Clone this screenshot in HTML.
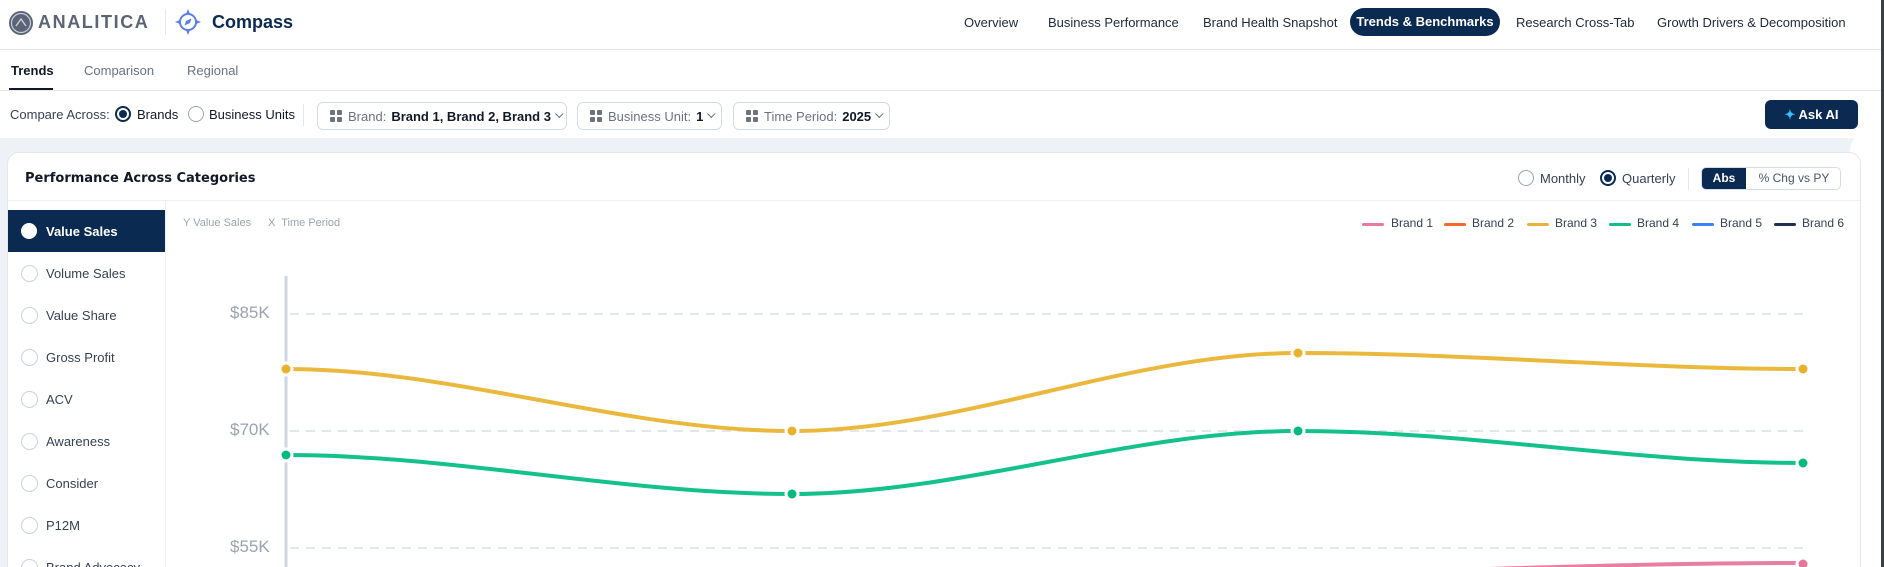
<!DOCTYPE html>
<html style="width:1884px;height:567px;overflow:hidden"><head><meta charset="utf-8"><style>
*{box-sizing:border-box;margin:0;padding:0}
body{width:1884px;height:567px;overflow:hidden;background:#fff;font-family:"Liberation Sans",sans-serif;position:relative;color:#1f2937}
.a{position:absolute;white-space:nowrap}
.nav{font-size:13px;color:#1f2937;top:15px}
.pill{position:absolute;top:102px;height:28px;border:1px solid #d5dbe5;border-radius:6px;font-size:13px;color:#6b7280;display:flex;align-items:center;padding-left:12px}
.pill b{color:#111827;margin-left:5px}
.grid4{display:inline-grid;grid-template-columns:5px 5px;gap:2px;margin-right:6px}
.grid4 i{width:5px;height:5px;background:#6b7280;border-radius:1px}
.chev{margin-left:6px;width:6px;height:6px;border-right:1.3px solid #6b7280;border-bottom:1.3px solid #6b7280;transform:rotate(45deg) translate(-2px,-1px)}
.radio{position:absolute;width:16px;height:16px;border:1.5px solid #9ca3af;border-radius:50%}
.radio.on{border:2px solid #0b2a52}
.radio.on::after{content:"";position:absolute;left:2px;top:2px;width:8px;height:8px;border-radius:50%;background:#0b2a52}
.side{font-size:13px;color:#374151}
.sr{position:absolute;left:21px;width:17px;height:17px;border:1px solid #cbd2dc;border-radius:50%}
.leg{position:absolute;top:223px;height:3px;width:22px;border-radius:2px}
.lt{font-size:12px;color:#374151;top:216px}
</style></head><body>
<svg class="a" style="left:9px;top:11px" width="24" height="24" viewBox="0 0 24 24"><circle cx="12" cy="12" r="12" fill="#5b6477"/><circle cx="12" cy="12" r="9.5" fill="none" stroke="#c7ccd6" stroke-width="1.2"/><path d="M7 15 L12 8 L17 15" fill="none" stroke="#c7ccd6" stroke-width="1.5"/></svg>
<div class="a" style="left:38px;top:12px;font-size:18px;font-weight:bold;color:#5b6477;letter-spacing:1.6px">ANALITICA</div>
<div class="a" style="left:165px;top:9px;width:1px;height:26px;background:#e5e7eb"></div>
<svg class="a" style="left:174px;top:8px" width="28" height="28" viewBox="0 0 28 28"><circle cx="14" cy="14" r="8" fill="none" stroke="#5b7fe6" stroke-width="2"/><path d="M14 1 L16 6 L12 6Z M14 27 L16 22 L12 22Z M1 14 L6 12 L6 16Z M27 14 L22 12 L22 16Z" fill="#5b7fe6"/><path d="M17.5 10.5 L12 13 L10.5 17.5 L16 15Z" fill="#5b7fe6"/></svg>
<div class="a" style="left:212px;top:12px;font-size:18px;font-weight:bold;color:#0b2a52">Compass</div>
<div class="a nav" style="left:964px">Overview</div>
<div class="a nav" style="left:1048px">Business Performance</div>
<div class="a nav" style="left:1203px">Brand Health Snapshot</div>
<div class="a" style="left:1350px;top:8px;width:150px;height:28px;border-radius:14px;background:#0b2a52;color:#fff;font-size:13px;font-weight:bold;text-align:center;line-height:28px">Trends &amp; Benchmarks</div>
<div class="a nav" style="left:1516px">Research Cross-Tab</div>
<div class="a nav" style="left:1657px">Growth Drivers &amp; Decomposition</div>
<div class="a" style="left:0;top:49px;width:1884px;height:1px;background:#e5e7eb"></div>
<div class="a" style="left:11px;top:63px;font-size:13px;font-weight:bold;color:#111827">Trends</div>
<div class="a" style="left:9px;top:88px;width:44px;height:2px;background:#111827"></div>
<div class="a" style="left:84px;top:63px;font-size:13px;color:#6b7280">Comparison</div>
<div class="a" style="left:187px;top:63px;font-size:13px;color:#6b7280">Regional</div>
<div class="a" style="left:0;top:90px;width:1884px;height:1px;background:#e5e7eb"></div>
<div class="a" style="left:10px;top:107px;font-size:13px;color:#374151">Compare Across:</div>
<div class="radio on" style="left:115px;top:106px"></div>
<div class="a" style="left:137px;top:107px;font-size:13px;color:#111827">Brands</div>
<div class="radio" style="left:188px;top:106px"></div>
<div class="a" style="left:209px;top:107px;font-size:13px;color:#111827">Business Units</div>
<div class="a" style="left:303px;top:104px;width:1px;height:22px;background:#e5e7eb"></div>
<div class="pill" style="left:317px;width:250px"><span class="grid4"><i></i><i></i><i></i><i></i></span>Brand:<b>Brand 1, Brand 2, Brand 3</b><span class="chev"></span></div>
<div class="pill" style="left:577px;width:145px"><span class="grid4"><i></i><i></i><i></i><i></i></span>Business Unit:<b>1</b><span class="chev"></span></div>
<div class="pill" style="left:733px;width:157px"><span class="grid4"><i></i><i></i><i></i><i></i></span>Time Period:<b>2025</b><span class="chev"></span></div>
<div class="a" style="left:1765px;top:100px;width:93px;height:29px;border-radius:6px;background:#0b2a52;color:#fff;font-size:13px;font-weight:bold;line-height:29px;text-align:center"><span style="color:#38bdf8">✦</span> Ask AI</div>
<div class="a" style="left:0;top:138px;width:1882px;height:429px;background:#eef1f6"></div>
<div class="a" style="left:1850px;top:128px;width:32px;height:439px;background:#fff;border-top-left-radius:24px"></div>
<div class="a" style="left:1881px;top:0;width:3px;height:567px;background:#3a3f47"></div>
<div class="a" style="left:7px;top:152px;width:1854px;height:440px;background:#fff;border:1px solid #e3e7ee;border-radius:12px"></div>
<div class="a" style="left:25px;top:171px;font-size:13px;font-weight:bold;color:#111827;font-family:'DejaVu Sans',sans-serif">Performance Across Categories</div>
<div class="radio" style="left:1518px;top:170px"></div>
<div class="a" style="left:1540px;top:171px;font-size:13px;color:#374151">Monthly</div>
<div class="radio on" style="left:1600px;top:170px"></div>
<div class="a" style="left:1622px;top:171px;font-size:13px;color:#374151">Quarterly</div>
<div class="a" style="left:1688px;top:168px;width:1px;height:22px;background:#e5e7eb"></div>
<div class="a" style="left:1701px;top:167px;width:140px;height:23px;border:1px solid #d5dbe5;border-radius:5px;overflow:hidden">
<div style="position:absolute;left:0;top:0;width:44px;height:23px;background:#0b2a52;color:#fff;font-size:12px;font-weight:bold;text-align:center;line-height:21px">Abs</div>
<div style="position:absolute;left:44px;top:0;width:96px;font-size:12px;color:#4b5563;text-align:center;line-height:21px">% Chg vs PY</div></div>
<div class="a" style="left:8px;top:200px;width:1852px;height:1px;background:#eceff3"></div>
<div class="a" style="left:165px;top:201px;width:1px;height:366px;background:#eceff3"></div>
<div class="a" style="left:8px;top:210px;width:157px;height:42px;background:#0b2a52"></div>
<div class="a" style="left:21px;top:223px;width:16px;height:16px;border-radius:50%;background:#fff"></div>
<div class="a side" style="left:46px;top:224px;color:#fff;font-weight:bold">Value Sales</div>
<div class="sr" style="top:265px"></div><div class="a side" style="left:46px;top:266px">Volume Sales</div>
<div class="sr" style="top:307px"></div><div class="a side" style="left:46px;top:308px">Value Share</div>
<div class="sr" style="top:349px"></div><div class="a side" style="left:46px;top:350px">Gross Profit</div>
<div class="sr" style="top:391px"></div><div class="a side" style="left:46px;top:392px">ACV</div>
<div class="sr" style="top:433px"></div><div class="a side" style="left:46px;top:434px">Awareness</div>
<div class="sr" style="top:475px"></div><div class="a side" style="left:46px;top:476px">Consider</div>
<div class="sr" style="top:517px"></div><div class="a side" style="left:46px;top:518px">P12M</div>
<div class="sr" style="top:559px"></div><div class="a side" style="left:46px;top:560px">Brand Advocacy</div>
<div class="a" style="left:183px;top:217px;font-size:11px;color:#9ca3af">Y Value Sales</div>
<div class="a" style="left:268px;top:217px;font-size:11px;color:#9ca3af">X&nbsp; Time Period</div>
<div class="leg" style="left:1362px;background:#e879a0"></div><div class="a lt" style="left:1391px">Brand 1</div>
<div class="leg" style="left:1444px;background:#f26b2a"></div><div class="a lt" style="left:1472px">Brand 2</div>
<div class="leg" style="left:1527px;background:#e9b23a"></div><div class="a lt" style="left:1555px">Brand 3</div>
<div class="leg" style="left:1609px;background:#0fbf85"></div><div class="a lt" style="left:1637px">Brand 4</div>
<div class="leg" style="left:1692px;background:#3b82f6"></div><div class="a lt" style="left:1720px">Brand 5</div>
<div class="leg" style="left:1774px;background:#1e2f55"></div><div class="a lt" style="left:1802px">Brand 6</div>
<div class="a" style="left:230px;top:303px;font-size:17px;color:#9ca3af">$85K</div>
<div class="a" style="left:230px;top:420px;font-size:17px;color:#9ca3af">$70K</div>
<div class="a" style="left:230px;top:537px;font-size:17px;color:#9ca3af">$55K</div>
<svg class="a" style="left:0;top:0" width="1884" height="567">
<g stroke="#e2e7ef" stroke-width="2" stroke-dasharray="9 7">
<line x1="290" y1="314" x2="1803" y2="314"/><line x1="290" y1="431" x2="1803" y2="431"/><line x1="290" y1="548" x2="1803" y2="548"/></g>
<line x1="286" y1="276" x2="286" y2="567" stroke="#cfd6e0" stroke-width="3"/>
<path d="M286 369 C455 369 623 431 792 431 C961 431 1129 353 1298 353 C1467 353 1634 369 1803 369" fill="none" stroke="#ebb83e" stroke-width="4"/>
<path d="M286 455 C455 455 623 494 792 494 C961 494 1129 431 1298 431 C1467 431 1634 463 1803 463" fill="none" stroke="#14c18b" stroke-width="4"/>
<path d="M1298 575 C1467 570 1634 563 1803 563" fill="none" stroke="#e87fa3" stroke-width="4"/>
<g stroke="#fff" stroke-width="3">
<circle cx="286" cy="369" r="6" fill="#e9b02c"/><circle cx="792" cy="431" r="6" fill="#e9b02c"/><circle cx="1298" cy="353" r="6" fill="#e9b02c"/><circle cx="1803" cy="369" r="6" fill="#e9b02c"/>
<circle cx="286" cy="455" r="6" fill="#06b97d"/><circle cx="792" cy="494" r="6" fill="#06b97d"/><circle cx="1298" cy="431" r="6" fill="#06b97d"/><circle cx="1803" cy="463" r="6" fill="#06b97d"/>
<circle cx="1803" cy="564" r="6" fill="#e8769c"/></g>
</svg>
</body></html>
